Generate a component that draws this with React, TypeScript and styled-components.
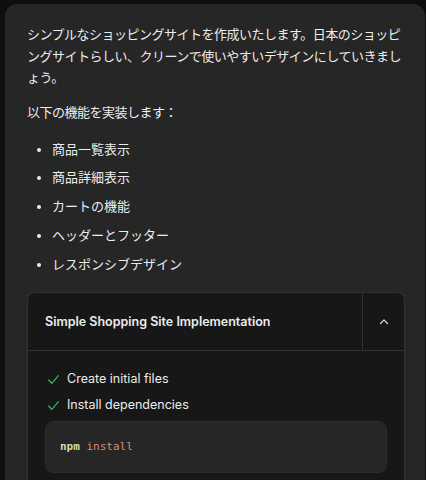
import React from "react";
import styled, { createGlobalStyle } from "styled-components";

const GlobalStyle = createGlobalStyle`
  html, body {
    margin: 0;
    padding: 0;
    background: #0e0e0e;
  }
  body {
    font-family: Inter, "Noto Sans CJK JP", sans-serif;
    -webkit-font-smoothing: antialiased;
  }
`;

const Page = styled.div`
  padding: 4px 1px 0 5px;
  height: 476px;
  overflow: hidden;
`;

const Message = styled.div`
  background: #262626;
  border-radius: 12px;
  padding: 20px 21px 40px 22px;
  color: #ececec;
  font-size: 13px;
  line-height: 21.5px;
  min-height: 520px;
`;

const Para = styled.p`
  margin: 0 0 13.5px;
  letter-spacing: -0.5px;
`;

const List = styled.ul`
  margin: 15px 0 0;
  padding: 0 0 0 25px;
  list-style: disc;
`;

const Item = styled.li`
  margin-bottom: 7.25px;
  &::marker {
    font-size: 12px;
  }
`;

const Panel = styled.div`
  margin-top: 17px;
  width: 376px;
  background: #171717;
  border: 1px solid #313131;
  border-radius: 8px;
  overflow: hidden;
`;

const PanelHeader = styled.div`
  display: flex;
  align-items: stretch;
  height: 57px;
  border-bottom: 1px solid #313131;
`;

const PanelTitle = styled.div`
  flex: 1;
  display: flex;
  align-items: center;
  padding-left: 17px;
  font-family: Inter, sans-serif;
  font-weight: 600;
  font-size: 12.5px;
  color: #ececec;
`;

const ToggleButton = styled.div`
  width: 41px;
  border-left: 1px solid #313131;
  display: flex;
  align-items: center;
  justify-content: center;
  color: #d4d4d4;
`;

const PanelBody = styled.div`
  padding: 15px 17px 20px;
`;

const Step = styled.div`
  display: flex;
  align-items: center;
  gap: 7px;
  height: 26px;
  padding-left: 2px;
  font-family: Inter, sans-serif;
  font-size: 12.5px;
  color: #ececec;
`;

const CodeBlock = styled.div`
  margin-top: 3px;
  background: #262626;
  border: 1px solid #2c2c2c;
  border-radius: 8px;
  height: 50px;
  display: flex;
  align-items: center;
  padding-left: 14px;
  font-family: "DejaVu Sans Mono", "Liberation Mono", monospace;
  font-size: 11px;
`;

const Cmd = styled.span<{ $tone: "cmd" | "arg" }>`
  color: ${(p) => (p.$tone === "cmd" ? "#d7dba3" : "#cf8f76")};
  font-weight: ${(p) => (p.$tone === "cmd" ? 700 : 400)};
`;

const Check = () => (
  <svg width="13" height="13" viewBox="0 0 24 24" fill="none" stroke="#2fbf5f" strokeWidth="2.2" strokeLinecap="round" strokeLinejoin="round">
    <path d="M3 13l6 6L21 5" />
  </svg>
);

const ChevronUp = () => (
  <svg width="12" height="12" viewBox="0 0 24 24" fill="none" stroke="currentColor" strokeWidth="2.4" strokeLinecap="round" strokeLinejoin="round">
    <path d="M5 15l7-7 7 7" />
  </svg>
);

const features = [
  "商品一覧表示",
  "商品詳細表示",
  "カートの機能",
  "ヘッダーとフッター",
  "レスポンシブデザイン",
];

export default function App() {
  return (
    <>
      <GlobalStyle />
      <Page>
        <Message>
          <Para>
            シンプルなショッピングサイトを作成いたします。日本のショッピングサイトらしい、クリーンで使いやすいデザインにしていきましょう。
          </Para>
          <Para>以下の機能を実装します：</Para>
          <List>
            {features.map((f) => (
              <Item key={f}>{f}</Item>
            ))}
          </List>
          <Panel>
            <PanelHeader>
              <PanelTitle>Simple Shopping Site Implementation</PanelTitle>
              <ToggleButton>
                <ChevronUp />
              </ToggleButton>
            </PanelHeader>
            <PanelBody>
              <Step>
                <Check />
                Create initial files
              </Step>
              <Step>
                <Check />
                Install dependencies
              </Step>
              <CodeBlock>
                <Cmd $tone="cmd">npm</Cmd>&nbsp;<Cmd $tone="arg">install</Cmd>
              </CodeBlock>
            </PanelBody>
          </Panel>
        </Message>
      </Page>
    </>
  );
}
